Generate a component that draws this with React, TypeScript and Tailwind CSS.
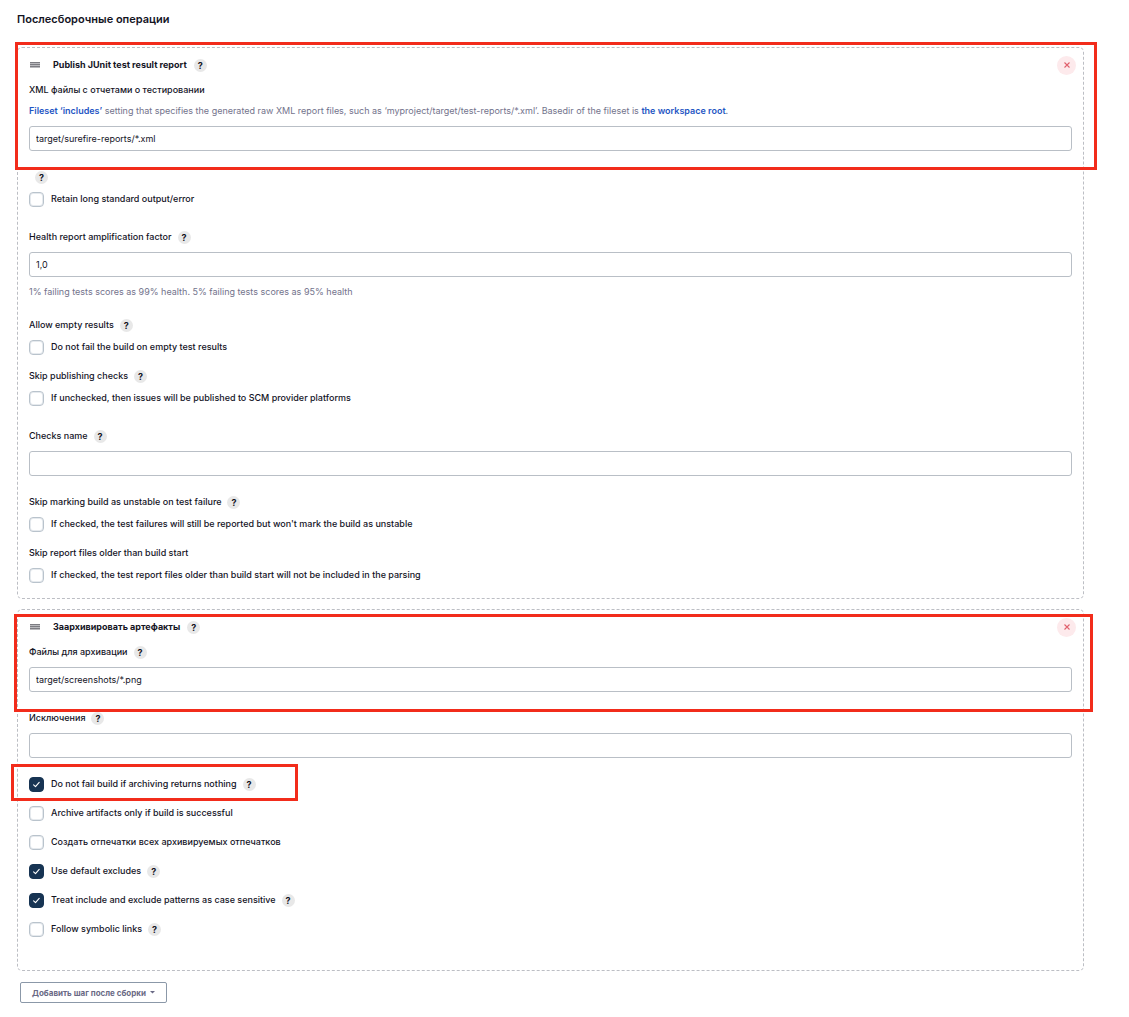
import { useId, useState } from "react";
import type { ReactNode } from "react";

function Help({ topic }: { topic: string }) {
  return (
    <button
      type="button"
      aria-label={"Help: " + topic}
      className="flex size-[13px] shrink-0 items-center justify-center rounded-full bg-[#e8e8e8] text-[9px] leading-none font-bold text-[#14141f]"
    >
      ?
    </button>
  );
}

function Checkbox({
  label,
  checked = false,
  help = false,
}: {
  label: string;
  checked?: boolean;
  help?: boolean;
}) {
  const id = useId();
  const [on, setOn] = useState(checked);
  return (
    <div className="flex h-[15px] items-center">
      <span className="relative mr-[7px] flex size-[15px] shrink-0">
        <input
          id={id}
          type="checkbox"
          checked={on}
          onChange={() => setOn(!on)}
          className="size-[15px] appearance-none rounded-[4px] border border-[#b9c3cc] bg-white inset-ring inset-ring-[#e6eaee] checked:border-[#173453] checked:bg-[#173453] checked:inset-ring-[#173453]"
        />
        {on && (
          <svg
            viewBox="0 0 15 15"
            className="pointer-events-none absolute inset-0 size-[15px]"
            fill="none"
            stroke="#fff"
            strokeWidth="1.1"
            strokeLinecap="round"
            strokeLinejoin="round"
          >
            <path d="M4.6 7.8l1.900 1.900 3.700-4.300" />
          </svg>
        )}
      </span>
      <label htmlFor={id} className="pb-px">
        {label}
      </label>
      {help && (
        <span className="ml-[6px] flex">
          <Help topic={label} />
        </span>
      )}
    </div>
  );
}

function FieldLabel({
  children,
  htmlFor,
  help,
}: {
  children: string;
  htmlFor?: string;
  help?: boolean;
}) {
  return (
    <div className="flex h-4 items-center gap-[6px]">
      {htmlFor ? <label htmlFor={htmlFor}>{children}</label> : <span>{children}</span>}
      {help && <Help topic={children} />}
    </div>
  );
}

function TextInput({ id, value = "" }: { id: string; value?: string }) {
  return (
    <input
      id={id}
      type="text"
      defaultValue={value}
      className="block h-[25px] w-full rounded-[3px] border border-[#b9bfc6] bg-white px-[6px] text-[9px] font-normal text-[#14141f] outline-none"
    />
  );
}

function StepHeader({ title }: { title: string }) {
  return (
    <div className="flex h-5 items-center">
      <svg viewBox="0 0 10 6" className="ml-px h-[6px] w-[10px]">
        <path d="M0 0h10v6H0z" fill="#b9b9bd" />
        <path d="M0 0h10v1H0zM0 2h10v1H0zM0 4h10v1H0z" fill="#7c7c82" />
      </svg>
      <h3 className="ml-[13px] font-bold">{title}</h3>
      <span className="ml-[7px] flex">
        <Help topic={title} />
      </span>
      <button
        type="button"
        aria-label={"Delete: " + title}
        className="-mr-1 ml-auto flex size-[19px] items-center justify-center rounded-full bg-[#fdeaec]"
      >
        <svg viewBox="0 0 6 6" className="size-[6px]" stroke="#e0606c" strokeWidth="1.1">
          <path d="M0.5 0.5l5 5M5.5 0.5l-5 5" />
        </svg>
      </button>
    </div>
  );
}

function Step({ children, className }: { children: ReactNode; className: string }) {
  return (
    <section
      className={
        "relative rounded-[5px] border border-dashed border-[#bcbec4] px-[11px] pt-[7px] " +
        className
      }
    >
      {children}
    </section>
  );
}

export default function App() {
  return (
    <main className="bg-white pt-[10px] pr-[45px] pb-[13px] pl-[17px] font-['Inter',sans-serif] text-[9px] leading-[14px] font-[450] text-[#14141f]">
      <h2 className="text-[11px] leading-[18px] font-semibold">Послесборочные операции</h2>

      <Step className="mt-[19px] pb-[15px]">
        <StepHeader title="Publish JUnit test result report" />
        <div className="mt-[7px]">
          <FieldLabel htmlFor="xml">XML файлы с отчетами о тестировании</FieldLabel>
        </div>
        <p className="mt-[6px] mb-[8px] font-normal text-[#73738c]">
          <a href="#includes" className="font-semibold text-[#1f56c4]">
            Fileset ‘includes’
          </a>{" "}
          setting that specifies the generated raw XML report files, such as
          ‘myproject/target/test-reports/*.xml’. Basedir of the fileset is{" "}
          <a href="#workspace" className="font-semibold text-[#1f56c4]">
            the workspace root
          </a>
          .
        </p>
        <TextInput id="xml" value="target/surefire-reports/*.xml" />
        <div className="mt-[18px] mb-[7px] flex h-4 items-center pl-[6px]">
          <Help topic="Retain long standard output/error" />
        </div>
        <Checkbox label="Retain long standard output/error" />

        <div className="mt-[22px] mb-[7px]">
          <FieldLabel htmlFor="factor" help>
            Health report amplification factor
          </FieldLabel>
        </div>
        <TextInput id="factor" value="1,0" />
        <p className="mt-[8px] font-normal text-[#73738c]">
          1% failing tests scores as 99% health. 5% failing tests scores as 95% health
        </p>

        <div className="mt-[18px] flex flex-col gap-[7px]">
          <FieldLabel help>Allow empty results</FieldLabel>
          <Checkbox label="Do not fail the build on empty test results" />
        </div>
        <div className="mt-[13px] flex flex-col gap-[7px]">
          <FieldLabel help>Skip publishing checks</FieldLabel>
          <Checkbox label="If unchecked, then issues will be published to SCM provider platforms" />
        </div>
        <div className="mt-[22px] flex flex-col gap-[7px]">
          <FieldLabel htmlFor="checks" help>
            Checks name
          </FieldLabel>
          <TextInput id="checks" />
        </div>
        <div className="mt-[18px] flex flex-col gap-[7px]">
          <FieldLabel help>Skip marking build as unstable on test failure</FieldLabel>
          <Checkbox label="If checked, the test failures will still be reported but won't mark the build as unstable" />
        </div>
        <div className="mt-[13px] flex flex-col gap-[7px]">
          <FieldLabel>Skip report files older than build start</FieldLabel>
          <Checkbox label="If checked, the test report files older than build start will not be included in the parsing" />
        </div>

        <div className="pointer-events-none absolute -top-[6px] -right-[14px] -left-[3px] h-[128px] border-3 border-[#f22c1b]" />
      </Step>

      <Step className="mt-[10px] pb-[33px]">
        <StepHeader title="Заархивировать артефакты" />
        <div className="mt-[7px] flex flex-col gap-[7px]">
          <FieldLabel htmlFor="files" help>
            Файлы для архивации
          </FieldLabel>
          <TextInput id="files" value="target/screenshots/*.png" />
        </div>
        <div className="mt-[18px] flex flex-col gap-[7px]">
          <FieldLabel htmlFor="excludes" help>
            Исключения
          </FieldLabel>
          <TextInput id="excludes" />
        </div>
        <div className="relative mt-[19px] flex flex-col gap-[14px]">
          <Checkbox label="Do not fail build if archiving returns nothing" checked help />
          <Checkbox label="Archive artifacts only if build is successful" />
          <Checkbox label="Создать отпечатки всех архивируемых отпечатков" />
          <Checkbox label="Use default excludes" checked help />
          <Checkbox label="Treat include and exclude patterns as case sensitive" checked help />
          <Checkbox label="Follow symbolic links" help />
          <div className="pointer-events-none absolute -top-[13px] -left-[18px] h-[37px] w-[287px] border-3 border-[#f22c1b]" />
        </div>

        <div className="pointer-events-none absolute top-[4px] -right-[10px] -left-[4px] h-[98px] border-3 border-[#f22c1b]" />
      </Step>

      <button
        type="button"
        className="mt-[11px] ml-[3px] flex h-[21px] items-center gap-[4px] rounded-[2px] border border-[#8b98a8] bg-white px-[11px] text-[8px] font-bold text-[#6a6a85]"
      >
        Добавить шаг после сборки
        <svg viewBox="0 0 5 3" className="h-[3px] w-[5px]" fill="currentColor">
          <path d="M0 0h5L2.500 2.500z" />
        </svg>
      </button>
    </main>
  );
}
